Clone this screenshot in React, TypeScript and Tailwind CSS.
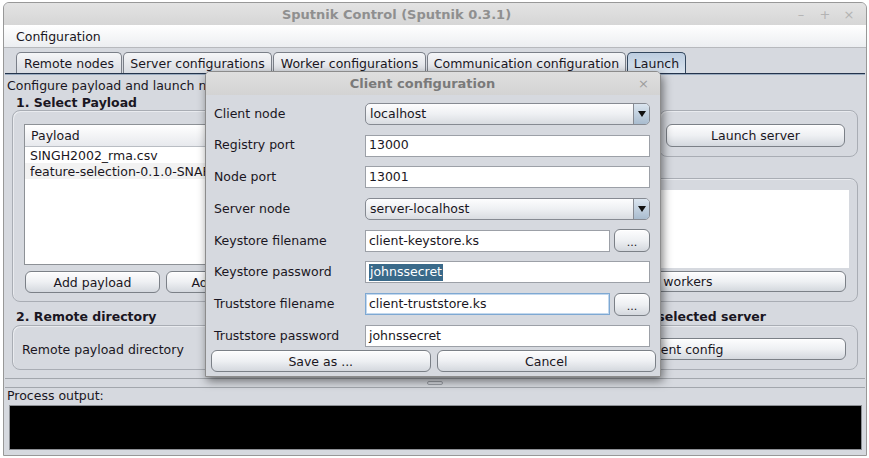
import type { ReactNode } from "react";

const btn =
  "flex items-center justify-center rounded-[6px] border border-[#7b8087] bg-gradient-to-b from-[#fdfdfe] via-[#eef0f3] to-[#d4d8de] pt-[2px] shadow-[inset_0_1px_0_#ffffff]";
const group = "rounded-[8px] border border-[#a9adb4] shadow-[inset_1px_1px_0_#e9ebef]";

function Combo({ value }: { value: string }) {
  return (
    <div className="flex h-[22px] items-stretch rounded-[5px] border border-[#868a92] bg-gradient-to-b from-[#fdfdfe] via-[#eef0f3] to-[#d9dce1]">
      <div className="flex flex-1 items-center pl-[4px]">{value}</div>
      <div className="flex w-[16px] items-center justify-center rounded-r-[4px] border-l border-[#868a92] bg-gradient-to-b from-[#dbe5ef] to-[#a9bccf]">
        <svg width="8" height="6" viewBox="0 0 8 6">
          <path d="M0 0h8L4 6z" fill="#111" />
        </svg>
      </div>
    </div>
  );
}

function Field({ children, focused }: { children?: ReactNode; focused?: boolean }) {
  return (
    <div
      className={
        focused
          ? "flex h-[22px] flex-1 items-center border border-[#7ea8d2] bg-white pl-[3px] shadow-[inset_0_0_0_1px_#c2d8ee]"
          : "flex h-[22px] flex-1 items-center border border-[#9ca0a7] bg-white pl-[3px]"
      }
    >
      {children}
    </div>
  );
}

function FileField({ value, focused }: { value: string; focused?: boolean }) {
  return (
    <div className="flex items-center gap-[4px]">
      <Field focused={focused}>{value}</Field>
      <div className={`${btn} h-[23px] w-[36px] pt-[4px] text-[11px]`}>...</div>
    </div>
  );
}

function Row({ label, children }: { label: string; children: ReactNode }) {
  return (
    <div className="flex h-[22px] items-center">
      <div className="w-[151px]">{label}</div>
      <div className="flex-1">{children}</div>
    </div>
  );
}

const tabs = [
  { name: "Remote nodes", w: "w-[106px]" },
  { name: "Server configurations", w: "w-[149px]" },
  { name: "Worker configurations", w: "w-[153px]" },
  { name: "Communication configuration", w: "w-[199px]" },
];

export default function App() {
  return (
    <div className="h-[458px] w-[869px] overflow-hidden bg-white pl-[3px] pt-[2px] font-['DejaVu_Sans',sans-serif] text-[12.5px] leading-none text-[#1a1622]">
      <div className="relative flex h-[454px] w-[864px] flex-col rounded-t-[6px] border border-[#989898] bg-[#d6d9df]">
        {/* title bar */}
        <div className="flex h-[22px] items-center rounded-t-[5px] bg-gradient-to-b from-[#e3e3e3] to-[#d6d6d6]">
          <div className="flex-1 text-center text-[13px] font-bold text-[#8f8f8f]">Sputnik Control (Sputnik 0.3.1)</div>
          <div className="flex pr-[5px] text-[13px] text-[#b3b3b3]">
            <span className="w-[24px] text-center">–</span>
            <span className="w-[24px] text-center">+</span>
            <span className="w-[24px] text-center">×</span>
          </div>
        </div>

        {/* menu */}
        <div className="flex h-[23px] items-center border-b border-[#b7b9bd] bg-gradient-to-b from-white to-[#eceef1] pl-[12px] pt-[2px]">
          Configuration
        </div>

        {/* tabs */}
        <div className="flex h-[25px] items-end gap-[1px] pl-[12px]">
          {tabs.map((t) => (
            <div
              key={t.name}
              className={`${t.w} flex h-[21px] items-center justify-center rounded-t-[5px] border border-b-0 border-[#7a7f88] bg-gradient-to-b from-[#f5f6f8] to-[#d9dce2] pt-[2px]`}
            >
              {t.name}
            </div>
          ))}
          <div className="flex h-[21px] w-[59px] items-center justify-center rounded-t-[5px] border border-b-0 border-[#33475e] bg-gradient-to-b from-[#bccde0] to-[#dbe4ee] pt-[2px]">
            Launch
          </div>
        </div>
        <div className="mx-[1px] h-[1px] bg-[#24344c]" />
        <div className="mx-[1px] h-[1px] bg-[#9aabbf]" />

        <div className="flex h-[20px] items-center pl-[3px] pt-[2px]">Configure payload and launch n</div>

        {/* top row */}
        <div className="flex gap-[10px] px-[8px]">
          <div className="w-[428px]">
            <div className="flex h-[15px] items-center pl-[4px] pt-[2px] font-bold">1. Select Payload</div>
            <div className={`${group} flex h-[192px] flex-col px-[11px] pt-[13px]`}>
              <div className="h-[141px] overflow-hidden border border-[#8d9196] bg-white">
                <div className="flex h-[22px] items-center border-b border-[#b9bdc3] bg-gradient-to-b from-white to-[#e7e9ed] pl-[6px] pt-[2px]">
                  Payload
                </div>
                <div className="flex h-[16px] items-center whitespace-nowrap pl-[5px] pt-[2px]">SINGH2002_rma.csv</div>
                <div className="flex h-[16px] items-center bg-[#f2f2f2] pl-[5px] pt-[2px]">
                  <span className="w-[176px] overflow-hidden whitespace-nowrap">feature-selection-0.1.0-SNAPSHOT.jar</span>
                </div>
              </div>
              <div className="mt-[6px] grid h-[22px] grid-cols-[135px_135px_1fr] gap-[6px] pl-[1px]">
                <div className={btn}>Add payload</div>
                <div className={btn}>Add directory</div>
                <div className={btn}>Remove</div>
              </div>
            </div>
          </div>
          <div className="flex-1">
            <div className="h-[15px]" />
            <div className={`${group} ml-auto h-[47px] w-[199px] pl-[6px] pr-[12px] pt-[13px]`}>
              <div className={`${btn} h-[23px]`}>Launch server</div>
            </div>
            <div className="h-[21px]" />
            <div className={`${group} flex h-[124px] flex-col pl-[11px] pr-[8px] pt-[11px]`}>
              <div className="h-[78px] bg-white" />
              <div className={`${btn} mr-[3px] mt-[3px] h-[21px]`}>Launch all workers</div>
            </div>
          </div>
        </div>

        {/* second row */}
        <div className="flex gap-[10px] px-[8px]">
          <div className="w-[428px]">
            <div className="flex h-[23px] items-center pl-[4px] pt-[7px] font-bold">2. Remote directory</div>
            <div className={`${group} flex h-[45px] items-center pl-[9px] pr-[10px] pt-[5px]`}>
              <span>Remote payload directory</span>
            </div>
          </div>
          <div className="flex-1">
            <div className="flex h-[23px] items-center justify-end pr-[92px] pt-[7px] font-bold">3. Client config for selected server</div>
            <div className={`${group} h-[45px] px-[11px] pt-[12px]`}>
              <div className={`${btn} h-[22px]`}>Generate client config</div>
            </div>
          </div>
        </div>

        <div className="h-[8px]" />
        <div className="mx-[1px] flex h-[10px] items-center justify-center border-y border-[#a2a6ac]">
          <div className="h-[4px] w-[16px] rounded-[2px] border border-[#9a9ea5]" />
        </div>
        <div className="flex h-[15px] items-center pl-[3px] pt-[2px]">Process output:</div>
        <div className="ml-[5px] mr-[4px] mt-[2px] h-[45px] border border-[#8c8f94] bg-black" />

        {/* dialog */}
        <div className="absolute left-[201px] top-[68px] w-[456px] rounded-t-[5px] border border-[#8c8c8c] bg-[#d6d9df] shadow-[2px_4px_10px_rgba(0,0,0,0.5)]">
          <div className="flex h-[23px] items-center rounded-t-[4px] bg-gradient-to-b from-[#dfdfdf] to-[#d3d3d3]">
            <div className="flex-1 pl-[11px] text-center text-[13px] font-bold text-[#7a7a7a]">Client configuration</div>
            <div className="w-[32px] pr-[11px] text-right text-[13px] text-[#9d9d9d]">×</div>
          </div>
          <div className="flex flex-col gap-[9.7px] pl-[8px] pr-[10px] pt-[8px]">
            <Row label="Client node">
              <Combo value="localhost" />
            </Row>
            <Row label="Registry port">
              <Field>13000</Field>
            </Row>
            <Row label="Node port">
              <Field>13001</Field>
            </Row>
            <Row label="Server node">
              <Combo value="server-localhost" />
            </Row>
            <Row label="Keystore filename">
              <FileField value="client-keystore.ks" />
            </Row>
            <Row label="Keystore password">
              <Field>
                <span className="bg-[#3a6a8a] px-[1px] py-[2px] text-white">johnssecret</span>
              </Field>
            </Row>
            <Row label="Truststore filename">
              <FileField value="client-truststore.ks" focused />
            </Row>
            <Row label="Truststore password">
              <Field>johnssecret</Field>
            </Row>
          </div>
          <div className="mt-[3px] flex gap-[6px] pb-[4px] pl-[5px] pr-[4px]">
            <div className={`${btn} h-[22px] flex-1`}>Save as ...</div>
            <div className={`${btn} h-[22px] flex-1`}>Cancel</div>
          </div>
        </div>
      </div>
    </div>
  );
}
